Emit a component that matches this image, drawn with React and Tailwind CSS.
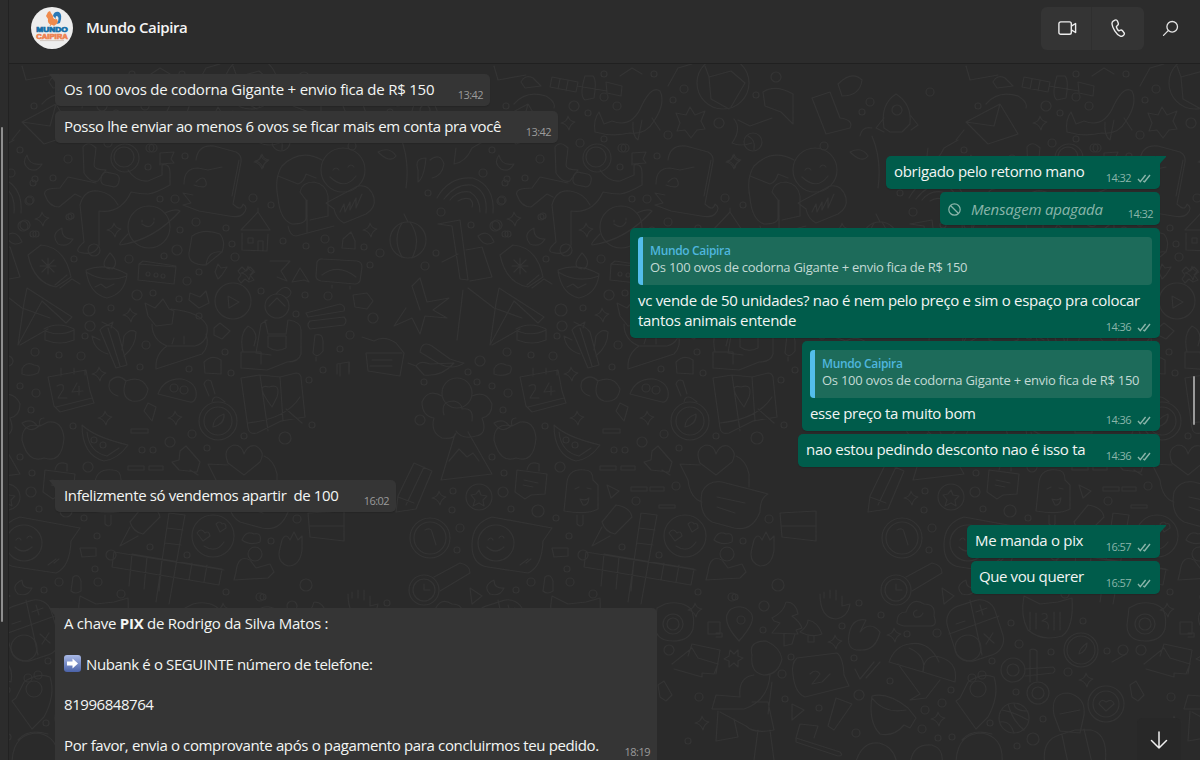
// App.jsx
import React from 'react';

const messages = [
  { id: 1, side: 'in', box: 'mt-[10px] h-8 w-[435px]', tail: true, text: 'Os 100 ovos de codorna Gigante + envio fica de R$ 150', time: '13:42', track: 'tracking-[-0.22px]' },
  { id: 2, side: 'in', box: 'mt-[5px] h-8 w-[503px]', text: 'Posso lhe enviar ao menos 6 ovos se ficar mais em conta pra você', time: '13:42', track: 'tracking-[-0.35px]' },
  { id: 3, side: 'out', box: 'mt-[13px] h-[33px] w-[274px]', tail: true, text: 'obrigado pelo retorno mano', time: '14:32', read: true, track: 'tracking-[-0.31px]' },
  { id: 4, side: 'out', box: 'mt-[3px] h-[33px] w-[220px]', deleted: true, text: 'Mensagem apagada', time: '14:32', track: 'tracking-[-0.2px]' },
  { id: 5, side: 'out', box: 'mt-[3px] h-[110px] w-[530px]', quote: true, text: 'vc vende de 50 unidades? nao é nem pelo preço e sim o espaço pra colocar\ntantos animais entende', time: '14:36', read: true, track: 'tracking-[-0.31px]' },
  { id: 6, side: 'out', box: 'mt-[3px] h-[90px] w-[358px]', quote: true, text: 'esse preço ta muito bom', time: '14:36', read: true, track: 'tracking-[-0.35px]' },
  { id: 7, side: 'out', box: 'mt-[3px] h-[33px] w-[362px]', text: 'nao estou pedindo desconto nao é isso ta', time: '14:36', read: true, track: 'tracking-[-0.3px]' },
  { id: 8, side: 'in', box: 'mt-[13px] h-8 w-[341px]', tail: true, text: 'Infelizmente só vendemos apartir  de 100', time: '16:02', track: 'tracking-[-0.38px]' },
  { id: 9, side: 'out', box: 'mt-[13px] h-[33px] w-[193px]', tail: true, text: 'Me manda o pix', time: '16:57', read: true, track: 'tracking-[-0.3px]' },
  { id: 10, side: 'out', box: 'mt-[3px] h-[33px] w-[189px]', text: 'Que vou querer', time: '16:57', read: true, track: 'tracking-[-0.4px]' },
];

// small dots scattered between the doodles
const dots = [
  [68, 159, 4], [33, 183, 3], [29, 201, 4], [53, 178, 3], [148, 167, 3], [150, 148, 4], [185, 156, 3], [175, 199, 4], [160, 199, 3],
  [253, 198, 4], [271, 205, 3], [23, 226, 5], [69, 217, 3], [33, 234, 3], [196, 222, 4], [180, 230, 3], [177, 250, 5], [226, 228, 3],
  [232, 244, 3], [94, 250, 6], [129, 259, 4], [74, 259, 3], [164, 256, 3], [235, 257, 4], [283, 241, 3], [306, 246, 3], [325, 239, 4],
  [331, 250, 3], [364, 247, 3], [380, 253, 4], [370, 265, 3], [187, 281, 4], [137, 295, 5], [153, 293, 3], [179, 299, 3], [199, 272, 3],
  [261, 291, 3], [305, 295, 3], [328, 296, 4], [89, 310, 6], [111, 308, 3], [90, 326, 5], [85, 336, 3], [199, 316, 3], [373, 318, 5],
  [350, 335, 4], [340, 349, 3], [296, 314, 3], [35, 352, 4], [59, 355, 3], [81, 356, 4], [146, 345, 4], [140, 367, 3], [225, 352, 3],
  [231, 373, 3], [189, 369, 3], [323, 370, 3], [309, 380, 3], [420, 420, 5], [480, 361, 5], [508, 393, 4], [492, 386, 3], [503, 410, 3],
  [468, 372, 3], [477, 382, 3], [424, 382, 3], [545, 426, 3], [560, 467, 5], [492, 457, 3], [504, 473, 3], [453, 491, 3], [503, 492, 5],
  [538, 511, 6], [511, 509, 3], [452, 510, 3], [460, 528, 4], [457, 550, 3], [556, 518, 3], [583, 555, 5], [569, 536, 3], [567, 569, 3],
  [531, 582, 4], [570, 582, 4], [516, 590, 3], [593, 594, 4], [642, 442, 5], [614, 450, 3], [625, 450, 3], [636, 501, 4], [676, 486, 4],
  [664, 434, 4], [679, 448, 3], [716, 436, 3], [757, 438, 6], [784, 425, 3], [769, 519, 4], [743, 541, 3], [778, 585, 6], [698, 592, 3],
  [659, 555, 3], [622, 547, 3], [735, 597, 3], [764, 606, 5], [763, 630, 3], [732, 597, 4], [842, 626, 3], [881, 615, 3], [859, 603, 3],
  [907, 634, 3], [937, 633, 4], [669, 650, 5], [699, 697, 4], [688, 741, 3], [782, 674, 4], [791, 657, 3], [854, 658, 3], [785, 699, 3],
  [819, 708, 3], [859, 695, 5], [856, 733, 4], [890, 681, 3], [942, 703, 4], [951, 690, 3], [922, 729, 4], [925, 710, 4], [938, 738, 3],
  [952, 737, 3], [990, 723, 3], [1016, 692, 3], [1043, 719, 3], [1033, 739, 6], [1017, 746, 3], [1019, 644, 4], [1011, 623, 3],
  [1051, 652, 3], [1107, 651, 3], [1123, 650, 5], [1083, 621, 3], [1068, 672, 4], [992, 661, 3], [506, 106, 3], [574, 106, 5],
  [604, 97, 4], [617, 106, 4], [588, 113, 3], [673, 100, 3], [684, 89, 4], [654, 74, 3], [719, 123, 5], [668, 135, 4], [625, 148, 4],
  [580, 143, 4], [604, 139, 3], [604, 74, 3], [483, 173, 4], [507, 179, 3], [441, 212, 4], [428, 193, 3], [502, 200, 4], [471, 225, 3],
  [497, 225, 5], [508, 234, 3], [543, 216, 3], [436, 253, 3], [425, 266, 4], [492, 150, 3], [776, 77, 5], [756, 95, 3],
];

const sparkles = [
  [42, 219], [114, 230], [261, 162], [130, 315], [99, 374], [105, 418], [175, 418], [568, 123], [734, 161], [439, 498], [894, 635],
  [835, 642], [702, 723], [938, 719], [695, 610], [1086, 680], [248, 273], [370, 230],
];

const Doodles = () => (
  <g id="doodles">
    {dots.map(([x, y, r], i) => (
      <circle key={i} cx={x} cy={y} r={r} />
    ))}
    {sparkles.map(([x, y], i) => (
      <path key={i} d={`M${x} ${y - 7}q1 5 7 6q-5 2-6 8q-2-6-8-7q6-1 7-7z`} />
    ))}
    {/* astronaut */}
    <circle cx="125" cy="158" r="14" />
    <circle cx="124" cy="157" r="10" />
    <path d="M83 147l1 26q6 10 14 8l8-11q-12 0-12-5l2-17q-8-8-13-1zM96 183l-28-6-8 11q-18 0-15 7q4 12 14 12l16-13 6 3M128 170q8 12 20 11l14-6v-10q8-2 8 8v12q-14 8-22 9-8 0-17-2q-10 22-32 19v34q-4 12-20 7q-4-2 5-10l-4-37q4-16 18-14q14 2 20 14M160 165v-12l14-1-3 7 3 4-14 1" />
    <rect x="101" y="173" width="18" height="13" rx="5" transform="rotate(12 110 180)" />
    {/* moons */}
    <path d="M27 155q-6 8 2 14q8 4 13-5q-13 2-15-9zM62 228q-12 6-4 16q10 4 15-5q-12 0-11-11zM494 580q-12 6-4 14q10 3 14-6q-10 1-10-8z" />
    {/* explorer */}
    <path d="M196 160q2-16 18-14l22 6q6 3 5 10l-8 42q8 8 10 0q6 4 0 10q-4 4-14 2l-30-5-16-6 8-2-8-10 10 2M184 184q0-16 14-16l10 2 14-3M232 196l7-36M196 182q8-8 10 0t-12 3" />
    {/* planet */}
    <circle cx="149" cy="227" r="21" />
    <path d="M128 234q-10 10-8 11q34-5 60-34q-4-3-15 2M142 220v2M154 218v2M142 224q8 6 12-2" />
    {/* sticker and hut */}
    <path d="M192 236q12-8 28-2q6 8 2 18l-16 13q-18 0-17-12zM222 252q-14-2-16 13M241 230l17-18 12 18zM242 233v17l25 1 1-17M258 212v-4M248 238h5v5h-5zM258 250v-9h5v10" />
    {/* big smile with bag */}
    <path d="M322 160q-22-12-40 6q-8 12-4 32q2 22 14 26q14 0 14-6v-18l-6-8q2-10 14-10q12 2 14 14v20l-18 4M278 176l20 8q6-2 8-10l10 4M288 226q2 10 8 10l38-10M307 200v32" />
    <circle cx="343" cy="170" r="22" />
    <path d="M333 170q3-4 6 0M348 167q3-4 6 0M330 177q15 14 26-1" />
    <path d="M326 203l32-17q12-2 16 12q2 10-8 16l-22 9q-8-4-10-14zM340 212l4-8 1 8 5-10v8l6-12v10l6-14" />
    {/* mitten, bowl, radio */}
    <path d="M28 255l13-10q24 2 30 32l-15 10q-22-4-28-32zM55 285l12-10M60 288l12-9 8 5M48 258v16M40 266h16M42 260l12 12M54 260l-12 12" />
    <path d="M86 270q20-8 41 4q-2 20-20 24q-18-4-21-28zM86 272q20 12 41 4M110 269q-12-2 0-16q10 10 2 16M95 287l6-3 5 4 8-4M139 264l37 3-2 17-36-4zM139 264l4-3 33 5" />
    <circle cx="148" cy="274" r="2" />
    <circle cx="156" cy="275" r="2" />
    <circle cx="163" cy="276" r="2" />
    {/* stars and alarm clock */}
    <path d="M218 264l-3 8 3 7 4-4 5-8-6 1zM242 267l4 4 4-4 4 4-4 4 4 5-5 2-4-3-4 4-3-4 3-4-3-4zM270 261h20l-9 10 6 10-10-4M292 282l8-14 9 14-5-2-6 1zM317 262q2-4 6-3l34 2q5 1 5 6l-2 14q-2 3-5 3l-34-3q-5-1-5-5zM322 275q16-12 34 2M332 285v3M350 286v3" />
    {/* flag and roll */}
    <path d="M27 288l45 29-6 6-24-22-24 44 6-42zM20 345l28-16M44 329q14-8 30 0v11q-14 6-29 0v-9q15 6 29-1" />
    {/* cactus */}
    <path d="M100 330q8-10 18 2l9 33-11 3zM108 328l12 38M100 340l-8-4q2 14 16 18M122 350l2-14q6-8 12-4q0 14-12 24M102 322l6 3 5-3-2 6" />
    {/* cat */}
    <path d="M145 303l10 5 8-9 6 10 5 2-2 13-16 2-8-10zM152 324q0 16 15 22h28q14-4 12-20q-6-14-36-17M167 346q-12 8-11 23l46-15q8-8 4-20M174 338l-2 6M184 336v8" />
    {/* play button */}
    <circle cx="233" cy="301" r="18" />
    <path d="M228 296l11 6-10 6zM190 293l10 4 6-6 3 12-10 5-5-4-5-4zM214 328l6-5 10 8-8 8-8-4z" />
    {/* guard */}
    <circle cx="277" cy="306" r="12" />
    <path d="M269 306l8-8 8 8M276 294q10-12 15-2q0 4-5 6M267 320l-6 4-5 29 15 2M289 320q12 2 12 10v24q-2 8-14 8l-20 8-26-2v-16h20v12M265 320l3 14h18l2-14M268 336h18v12q-10 5-18-1zM243 352q-4-18 5-26q8 4 8 12l-2 8" />
    {/* boards, mic, basket */}
    <path d="M306 313l34-9q6 2 4 7l-36 6zM310 321l34-4q4 4 0 8l-34 4q-4-4 0-8zM315 335q8-2 8 6v10q-6 8-10 2zM316 361v-4M337 374v-10l12-2v10M353 295l14-2 6 8-6 8-12-2zM362 337l12 4q10-6 22 2l8 10-4 23-32-5-2-18h36M372 360h20M370 366h22" />
    {/* drawer, cloud, bag */}
    <path d="M22 369q4-8 12-4q8 0 4 8q-8 4-16 1zM204 362q8-8 17-2v14l-16-1zM343 239l8-7 4 9v8l-13-1z" />
    {/* chili and flower */}
    <path d="M420 352q2-12 12-6l18 13q12 4 14 4q-12 8-26 0zM416 366q4-6 14-2l24-1q-12 14-30 12zM408 363l8 3M420 310l-8-24 8-8 7 24 22-4-16 12 14 8-22-2-5 18-8-16-18 8 12-18" />
    {/* volcano */}
    <circle cx="457" cy="393" r="15" />
    <path d="M442 396q-14-8-20 6q0 14 12 16q-4 14 8 20q12 2 14-5M472 396q14-6 20 8q0 12-10 14q6 16-6 18q-14 4-20-5M444 415q-4-14 10-14q8 2 8 8q12-2 10 12M455 434l-14 46 51-6-24-42M449 461l10-12 8 8 6-4 6 8" />
    {/* apple */}
    <path d="M512 426q-18-4-18 14q6 24 22 18q18 6 20-20q-2-18-16-16l-8 4q-2-8 4-8M494 423q8 12 18 2M494 423q10-6 16 4" />
    {/* calendar */}
    <path d="M520 377l38-7 4 21 4 12-34 9-6-6zM528 407l36-9M533 368v8M546 368v6M557 370v5M529 386q8-4 6 4l-5 8h9M549 383l-5 9 11-1M551 386v9" />
    {/* fruit */}
    <path d="M554 425q12 12 46 20q-10 14-24 16q-22-6-22-36zM559 432q2 20 20 24l12-8M590 396q-12-4-8-15q8-8 16 0q16-6 22 8q-2 14-16 12q-12-4-6-20M630 394q6-16 24-15q16 4 14 18q-2 6-6 5zM620 403l8 4-4 14-8-10z" />
    <circle cx="646" cy="388" r="4" />
    <circle cx="656" cy="390" r="4" />
    <circle cx="566" cy="440" r="3" />
    <circle cx="575" cy="445" r="3" />
    {/* compass */}
    <circle cx="690" cy="421" r="19" />
    <circle cx="690" cy="421" r="14" />
    <path d="M685 427q0-9 11-13q1 10-11 13zM684 402q2-10 13 0M681 396l-5-12q2-6 7-3l4 13" />
    {/* map */}
    <path d="M713 378l19-3 20 2 16-4q4 0 5 4l4 40-24 4-24 12q-8 2-9-5zM732 375l8 56M752 377l3 44M720 423q38-4 52-26M758 409l16 14M744 407q-18-24-3-20q12-4 8 10z" />
    {/* heart */}
    <path d="M716 475l-16-12q-6-14 6-18q8 0 10 9q4-10 12-8q10 6 4 16zM700 465l-20-1 8 16q2 18 14 22M736 456q10 4 13 18v13M702 492q6-12 20-10l46 12q-8 4-8 18q-8 20-26 16l-22-6q-14-8-10-30zM717 497l28 6M717 507l18 6" />
    {/* pin and morse */}
    <path d="M652 451l6-5 14 16-3 10-18-2-7-8 7-2zM662 470l8 5M603 429h17v4h-17zM600 466h16v4h-16zM621 466h14v4h-14zM631 487h16v4h-16zM650 487h14v4h-14zM659 505h16v3h-16zM607 485l12 6-8 7z" />
    {/* suitcase and pencil */}
    <path d="M517 470l30 4-2 20-14 1-6 4-10-7zM527 470q2-10 12-6v7M524 480l14 3M523 485l10 2M414 463l18 8-16 38-20 3 2-16zM424 467l-18 38M398 497l16 6" />
    {/* badge and coin */}
    <circle cx="479" cy="497" r="13" />
    <path d="M479 490l2 5 6 1-4 4 1 6-5-3-6 3 2-6-4-5 5-1z" />
    <circle cx="430" cy="538" r="20" />
    <circle cx="430" cy="538" r="16" />
    <path d="M425 530q6-3 7 2l4 13" />
    {/* ice pop */}
    <path d="M567 482q2-14 18-12q8 0 8 10l5 5v24q-10 6-34 2zM577 515v9q4 4 6 0v-9M575 489l4-2M587 488l4 1M580 499q6 2 9-1q-1 8-6 7z" />
    {/* smiley bubble */}
    <path d="M552 528l-60-11q-20 6-20 28q0 20 16 22l40 6q14-6 15-32z" />
    <circle cx="496" cy="543" r="18" />
    <path d="M488 540q3-4 5 0M499 538q3-4 5 0M487 547q8 8 17 0M520 565l8-6M526 563l5-4" />
    {/* pen and crossword */}
    <path d="M602 522l14-17q14 2 16 12l-17 17q-10-2-13-12zM602 527l-10 19 18-10M641 513l16 2-16 89M641 513l-13 89M639 528l16 2M637 543l16 2M604 554l90 15-3 16-107-18 2-15 110 18M604 554l-3 32M619 557l-3 32M634 559l-3 32M664 563l-3 17M679 565l-3 17" />
    {/* in-love smiley */}
    <circle cx="685" cy="536" r="21" />
    <path d="M675 541l-6-8q4-6 8 0q4-3 5 3zM692 532l-4-8q4-4 6 0q4-2 4 4zM676 546q12 8 20-4" />
    {/* chest, hands, people */}
    <path d="M780 513l36-2v30l-34-4zM782 526h34M714 540q4-10 12-6q8-2 6 8q-10 4-18-2zM754 540q4-8 8 0l4-8 4 8 4-4v14q-2 16-14 16q-12-4-8-18zM708 572q2-18 14-12l6 8 14-4 4 8-6 6-34 2z" />
    <circle cx="727" cy="554" r="7" />
    {/* watch */}
    <circle cx="424" cy="590" r="15" />
    <circle cx="424" cy="590" r="11" />
    <path d="M424 584v6h6M434 577l26-14q10 2 10 10l-30 18M545 577q6-4 8 4v10q-6 4-10 0zM552 548h16v8l-14 1zM470 588l12 8-10 8z" />
    {/* camera and pin */}
    <path d="M657 608l8-4q16-4 26 5q4 8 2 20q-4 12-20 12q-18 0-18-16zM708 622h12v12h-12zM716 633h6v4h-6M739 641q-20-22-8-32q12-6 20 4q6 8-12 28z" />
    <circle cx="673" cy="624" r="10" />
    <circle cx="673" cy="624" r="6" />
    <circle cx="741" cy="620" r="4" />
    {/* trees */}
    <path d="M772 618q12-6 14-16q10 0 12 12l-6 2q8 6 10 12l-6 2 2 4-26-1 8-10-6-2zM784 634v12l8-2 3-10M800 632q8-6 8-12q10 2 14 14q-10 4-22-2zM808 636v6h6v-6" />
    {/* hands and clouds */}
    <path d="M820 594q0 24 16 25q12-2 14-15l-8 2v-10M824 598v-6M830 598v-8M836 600v-10M850 630q4-12 16-10l-6 12q10-12 20 0q-4 18-18 18q-18 2-12-20zM897 622q0-10 9-10q6-16 18-8q12 0 10 12q4 10-4 10h-26q-8-2-7-4zM917 610q-6 2-2 7q6 1 8-4" />
    {/* calculator */}
    <rect x="950" y="602" width="50" height="57" rx="16" transform="rotate(-18 975 630)" />
    <path d="M970 600l12 55M949 634l50-18M956 624l9-3M976 612l11-4M980 605l3 10M984 634l10 9M993 633l-7 11" />
    <circle cx="968" cy="648" r="13" />
    {/* cat head */}
    <path d="M1024 596l16 8 18-2 14-4q2 30-10 38q-20 6-34-6q-8-14-4-34zM1030 612v18M1036 613v16M1042 614q6-2 5 4l-5 3q8 0 6 8M1054 612v18M1060 612v18" />
    {/* dials */}
    <circle cx="1081" cy="650" r="17" />
    <circle cx="1081" cy="650" r="14" />
    <path d="M1079 654q0-5 8-11q0 8-8 11z" />
    <circle cx="1013" cy="670" r="12" />
    <circle cx="1013" cy="670" r="6" />
    <circle cx="1038" cy="693" r="11" />
    <circle cx="1038" cy="693" r="6" />
    <path d="M1030 682v-32q4-2 7 1v30M1025 669l28-2q4 3 0 6l-28 3" />
    {/* basketball and heart ring */}
    <circle cx="1014" cy="718" r="15" />
    <path d="M1002 710q12 2 26 10M1008 704q4 16 16 26M1000 722q10-2 14 11M1014 703q0 8 14 8" />
    <circle cx="1106" cy="704" r="18" />
    <circle cx="1106" cy="704" r="13" />
    <path d="M1106 711l-7-7q2-6 7-2q6-4 8 2zM1130 685l6-4 8 14-6 6-6-4z" />
    {/* folders */}
    <path d="M672 664l20-16 6 10 20 6-4 10-12-1v4l-28-8M688 656l4-12 28 6-4 24M1112 662l14-8" />
    {/* person with flower */}
    <path d="M752 655q-4-14 14-14q14 6 16 18q-4 16-18 16q-14-2-12-20zM754 675q-16 2-14 22l-24-2-4 14h32q24-8 26-34M752 702h16l6 28q-20 4-28-4l-26-14M718 711l-2 30 22-4-4-18M772 682l-4 32M730 650l4 4 4-4v6l5 2-5 3v6l-4-4-5 4v-6l-5-2 5-3zM758 730l-4 30M770 730l4 30" />
    {/* chat bubble */}
    <path d="M797 658l40-5q6 4 7 22l5 11-44 11q-10-4-12-22q-2-12 4-17zM810 674q6-6 10 0l-8 10 10-2 8-8" />
    {/* checks and parasols */}
    <path d="M855 669l5 10 14-17M866 678l14-16M889 662q6-16 20-18q20-4 30 18M889 662l34 10q4-16-14-24M923 672l32 10q4-22-20-26q-12 2-12 16M898 664l22 30-10 6 16-2 14-18" />
    {/* cup and brush */}
    <path d="M872 696q16-4 36 12l8 10-6 10-6-3q-10 12-24 9q-12-12-8-38zM872 698q12 16 34 12M796 738l4-14 18 2-4 12M796 738l44 14q4 4-2 4l-42-14zM836 698l16 6-18 26-6-4zM792 704l12 6-12 10z" />
    {/* shield */}
    <path d="M960 698l8-16q14-10 26-5q6 18-6 40l-12 12-20-28z" />
    <circle cx="978" cy="689" r="8" />
    <circle cx="972" cy="678" r="4" />
    <circle cx="982" cy="675" r="4" />
    {/* bakery */}
    <path d="M956 765q0-32 26-32q22 4 20 30M962 740q10-12 30-6M855 765q6-24 24-22q16 4 18 22M910 765q2-22 22-20q12 4 10 18" />
    {/* detective */}
    <path d="M1054 715q-4-22 14-22q18 4 16 22l-4 18-20-2zM1060 714l20-4M1045 765q-4-24 14-30l16-5h16q18 4 14 35M1062 735l6 28M1084 729l8 34" />
    {/* satellite */}
    <path d="M552 77l26 5-2 10-26-5zM606 82l16 4-1 10-14-3zM560 79l-2 10M568 81l-2 10M577 86l30 5M585 76h8q4 4 1 22l-9 2q-6-4 0-24M521 82q4-8 12-4l8 8-16 2zM494 66l4 14 28-5M514 104q12-14 32-8q10 6 8 12M620 76l12-8 10 6M668 86l10-18 14-4" />
    {/* whale */}
    <path d="M595 132q-2-12 4-20l5 12 8-3q20 8 30-16q10-20 18-14q6 12-6 30q-8 14-24 12q-18 4-35-1zM642 120l-4 20q-6-4-5-18M652 118l8 12" />
    {/* burst and ball */}
    <path d="M676 113l10 2 4-8 5 8 10-4-4 10 4 8-8 1-6 8-6-8-8 1 3-8z" />
    <circle cx="723" cy="83" r="26" />
    <path d="M705 66l4 11 22-6M709 77l2 22 18 10M731 71l14 12-14 24" />
    <path d="M763 92q12-8 30 2v30l-12-12-16-6zM738 120l12 6 22-8M752 143q-12 4-20 0q10-14 2-24" />
    <circle cx="753" cy="142" r="9" />
    <path d="M748 136q8 4 6 14" />
    {/* rocket, boot, leaf */}
    <path d="M884 128q-4-24 12-34q16 10 14 30l-8 8h-12zM884 118l-8 10 8 4M911 116l7 9-7 5M812 98l18-6 10 26q14 2 10 10l-24 6zM838 84q14-14 24-4q-2 16-20 16zM860 136q2-10 12-8M850 152q12-6 18 4q-6 8-18-4z" />
    <circle cx="897" cy="110" r="5" />
    <circle cx="870" cy="102" r="4" />
    <circle cx="824" cy="146" r="4" />
    <circle cx="862" cy="112" r="3" />
    <circle cx="930" cy="92" r="4" />
    {/* rainbow */}
    <path d="M437 198q12-22 36-20q22 8 20 35M444 199q12-16 28-14q16 6 14 28M450 200q8-10 20-8q10 6 10 20M458 201q6-4 12-2q4 4 2 8M418 170q-4-12 8-12q-2 20-8 24zM430 160q10-8 14 4q-2 12-12 14M456 148l-2 16q12-2 18-16l14-8" />
    {/* bamboo and pumpkin */}
    <path d="M438 224l22-4 8 60-8-1-8-53-14-2M466 250l16-3 10 30-22 4M442 262l16-8M478 236q10-8 16 6q-10 6-16-6z" />
    <circle cx="408" cy="240" r="18" />
    <path d="M402 223q-10 16 0 34M410 222q12 18 2 36M408 222l-4-8M400 136q10 24 6 52" />
    {/* envelope and notes */}
    <path d="M22 122l34-18 18 30-30 10zM22 122l28 4 6-22M340 364v12M349 362v12M20 130l-8 10M463 290l-6 50M468 288l26 20 28 10" />
  </g>
);

const Wallpaper = () => (
  <svg className="absolute inset-0 h-full w-full" viewBox="9 64 1191 696" preserveAspectRatio="xMinYMin slice" fill="none" stroke="#343434" strokeWidth="1.2" strokeLinejoin="round" strokeLinecap="round">
    <Doodles />
    <use href="#doodles" x="-944" />
    <use href="#doodles" x="-472" />
    <use href="#doodles" x="472" />
    <use href="#doodles" x="944" />
  </svg>
);

const Checks = () => (
  <svg className="ml-[6px] h-[9px] w-[14px]" viewBox="0 0 14 9" fill="none" stroke="#8ab5aa" strokeWidth="1.4">
    <path d="M1 5L3.3 7.6L8.6 1" />
    <path d="M6.2 7L7.6 7.8L13 1" />
  </svg>
);

const Time = ({ message }) => (
  <span className={`flex shrink-0 items-center self-end text-[11px] leading-[14px] tracking-[-0.55px] ${message.side === 'in' ? 'text-[#9b9b9b]' : 'text-[#8ab5aa]'} ${message.read ? 'mr-[9px]' : 'mr-[7px]'}`}>
    {message.time}
    {message.read && <Checks />}
  </span>
);

const Quote = () => (
  <div className="mx-2 mt-[9px] flex h-12 shrink-0 overflow-hidden rounded-[4px] bg-[#1d6b5a]">
    <div className="w-[5px] bg-[#53bdeb]" />
    <div className="pt-[6px] pl-[7px] leading-4">
      <p className="text-[12px] font-semibold tracking-[-0.35px] text-[#4fb6de]">Mundo Caipira</p>
      <p className="text-[13px] tracking-[-0.26px] whitespace-nowrap text-[#c3dad5]">Os 100 ovos de codorna Gigante + envio fica de R$ 150</p>
    </div>
  </div>
);

const Tail = ({ side }) =>
  side === 'in' ? (
    <svg className="absolute top-0 -left-[6px] h-[10px] w-[10px]" viewBox="0 0 10 10" fill="#353535">
      <path d="M0 0H10V10H6V8Z" />
    </svg>
  ) : (
    <svg className="absolute top-0 -right-[6px] h-[10px] w-[10px]" viewBox="0 0 10 10" fill="#005c4b">
      <path d="M10 0H0V10H4V8Q5 6 10 1Z" />
    </svg>
  );

const Bubble = ({ message }) => (
  <div className={`relative flex shrink-0 flex-col rounded-[5px] shadow-[0_1px_1px_rgba(0,0,0,0.12)] ${message.box} ${message.side === 'in' ? 'self-start bg-[#353535]' : 'self-end bg-[#005c4b]'}`}>
    {message.tail && <Tail side={message.side} />}
    {message.quote && <Quote />}
    <div className="flex flex-1 justify-between pb-[4px]">
      {message.deleted ? (
        <p className={`flex items-center pt-[5px] pl-[8px] text-[15px] leading-5 text-[#8ab5aa] italic ${message.track}`}>
          <svg className="mr-[10px] h-[13px] w-[13px]" viewBox="0 0 13 13" fill="none" stroke="currentColor" strokeWidth="1.2">
            <circle cx="6.5" cy="6.5" r="5.7" />
            <path d="M2.5 2.5L10.5 10.5" />
          </svg>
          {message.text}
        </p>
      ) : (
        <p className={`min-w-0 pt-[5px] text-[15px] leading-5 whitespace-pre text-[#f3f5f4] ${message.side === 'in' ? 'pl-[9px]' : 'pl-[8px]'} ${message.track}`}>{message.text}</p>
      )}
      <Time message={message} />
    </div>
  </div>
);

const ArrowEmoji = () => (
  <svg className="mr-[5px] h-[17px] w-[17px]" viewBox="0 0 17 17">
    <defs>
      <linearGradient id="arrowBg" x1="0" y1="0" x2="0" y2="1">
        <stop offset="0" stopColor="#a9b9e6" />
        <stop offset="1" stopColor="#4a62a8" />
      </linearGradient>
    </defs>
    <rect width="17" height="17" rx="3" fill="url(#arrowBg)" />
    <path d="M3 6.5H8.5V3.5L14 8.5L8.5 13.5V10.5H3Z" fill="#fff" />
  </svg>
);

const PixBubble = () => (
  <div className="relative mt-[14px] flex h-[160px] w-[602px] shrink-0 justify-between self-start rounded-[5px] bg-[#353535]">
    <Tail side="in" />
    <div className="flex min-w-0 flex-col gap-[20.7px] pt-[5px] pl-[9px] text-[15px] leading-5 whitespace-nowrap text-[#f3f5f4]">
      <p className="tracking-[-0.26px]">
        A chave <b className="font-bold">PIX</b> de Rodrigo da Silva Matos :
      </p>
      <p className="flex items-center tracking-[-0.38px]">
        <ArrowEmoji />
        Nubank é o SEGUINTE número de telefone:
      </p>
      <p className="tracking-[-0.45px]">81996848764</p>
      <p className="tracking-[-0.36px]">Por favor, envia o comprovante após o pagamento para concluirmos teu pedido.</p>
    </div>
    <span className="mt-[137px] mr-[7px] text-[11px] leading-[14px] tracking-[-0.5px] text-[#9b9b9b]">18:19</span>
  </div>
);

const Logo = () => (
  <svg className="h-[42px] w-[42px] font-['Liberation_Sans',sans-serif]" viewBox="0 0 42 42">
    <circle cx="21" cy="21" r="21" fill="#ededed" />
    <path d="M17 5L19 4L20 6L22 9Q22 13 26 12L27 15Q25 19 21 18Q16 17 17 12L15 9Z" fill="#ef8a4b" />
    <path d="M22 9Q23 4 28 5Q32 8 29 16L26 17Q29 10 26 9Q24 9 25 12Z" fill="#2a78b5" />
    <path d="M20 17L19 19M23 17V19" stroke="#ef8a4b" strokeWidth="1" />
    <text x="21" y="24.6" textAnchor="middle" textLength="31.5" lengthAdjust="spacingAndGlyphs" fontSize="6.6" fontWeight="700" fill="#1770a8" stroke="#1770a8" strokeWidth="0.7">MUNDO</text>
    <text x="21" y="31.6" textAnchor="middle" textLength="31.5" lengthAdjust="spacingAndGlyphs" fontSize="6.6" fontWeight="700" fill="#ee8454" stroke="#ee8454" strokeWidth="0.7">CAIPIRA</text>
    <path d="M9 33.6H33" stroke="#c9b8ae" strokeWidth="0.7" />
  </svg>
);

const Header = () => (
  <header className="flex h-16 shrink-0 items-start border-b border-[#202020] bg-[#2c2c2c] pl-[22px]">
    <div className="mt-[7px]">
      <Logo />
    </div>
    <h1 className="mt-[17px] ml-[13px] text-[15px] leading-5 font-semibold tracking-[-0.38px] text-[#f5f5f5]">Mundo Caipira</h1>
    <div className="mt-[7px] ml-auto flex h-[43px] w-[103px] items-center rounded-[6px] bg-[#343434]">
      <button className="flex h-full w-[51px] items-center justify-center border-r border-[#2f2f2f] pr-px pb-[2px] pl-[3px]">
        <svg className="h-[14px] w-[19px]" viewBox="0 0 19 14" fill="none" stroke="#ececec" strokeWidth="1.4" strokeLinejoin="round">
          <rect x="0.9" y="0.9" width="12.4" height="12.4" rx="1.8" />
          <path d="M13.3 5.2L17.6 2.5V11.5L13.3 8.8" />
        </svg>
      </button>
      <button className="flex h-full flex-1 items-center justify-center pb-[2px] pl-px">
        <svg className="h-[18px] w-[16px]" viewBox="0 0 16 18" fill="none" stroke="#ececec" strokeWidth="1.4" strokeLinejoin="round">
          <path d="M2.2 2.1L4 1.1C5 .7 6 1.1 6.4 2.1L7.2 4.1C7.5 4.9 7.3 5.7 6.7 6.2L5.4 7.4C5.3 8.6 6.7 11.1 7.9 11.8L9.5 11.2C10.3 10.9 11 11.2 11.5 11.8L13 13.7C13.5 14.4 13.4 15.3 12.8 15.9L11.7 16.9C11 17.4 10.1 17.5 9.3 17.2C5.3 15.6 1.3 8.5 1 5C.9 3.8 1.2 2.8 2.2 2.1Z" />
        </svg>
      </button>
    </div>
    <button className="mt-[20px] mr-[21px] ml-[18px]">
      <svg className="h-[17px] w-[17px]" viewBox="0 0 17 17" fill="none" stroke="#e4e4e4" strokeWidth="1.3" strokeLinecap="round">
        <circle cx="10.2" cy="6.8" r="5.3" />
        <path d="M6.2 10.6L1.5 15.4" />
      </svg>
    </button>
  </header>
);

const App = () => {
  return (
    <div className="flex h-[760px] w-[1200px] overflow-hidden bg-[#2c2c2c] font-['Open_Sans','Noto_Sans',sans-serif]">
      <aside className="w-[9px] shrink-0 border-r border-[#222222] pl-px">
        <div className="mt-[127px] h-[495px] w-[2px] rounded-full bg-[#8f8f8f]" />
      </aside>
      <div className="flex min-w-0 flex-1 flex-col">
        <Header />
        <main className="relative min-h-0 flex-1 overflow-hidden bg-[#2a2a2a]">
          <Wallpaper />
          <div className="relative flex h-full flex-col pr-10 pl-[46px]">
            {messages.map((message) => (
              <Bubble key={message.id} message={message} />
            ))}
            <PixBubble />
          </div>
          {/* page scroll thumb */}
          <div className="absolute top-[312px] right-[5px] h-[49px] w-[2px] rounded-full bg-[#9a9a9a]" />
          <button className="absolute right-[19px] bottom-0 flex h-[42px] w-[44px] items-center justify-center rounded-t-[5px] bg-[#282828] pt-px">
            <svg className="h-[18px] w-[18px]" viewBox="0 0 18 18" fill="none" stroke="#f0f0f0" strokeWidth="1.5" strokeLinecap="round" strokeLinejoin="round">
              <path d="M9 1V17M1.5 9.5L9 17L16.5 9.5" />
            </svg>
          </button>
        </main>
      </div>
    </div>
  );
};

export default App;
